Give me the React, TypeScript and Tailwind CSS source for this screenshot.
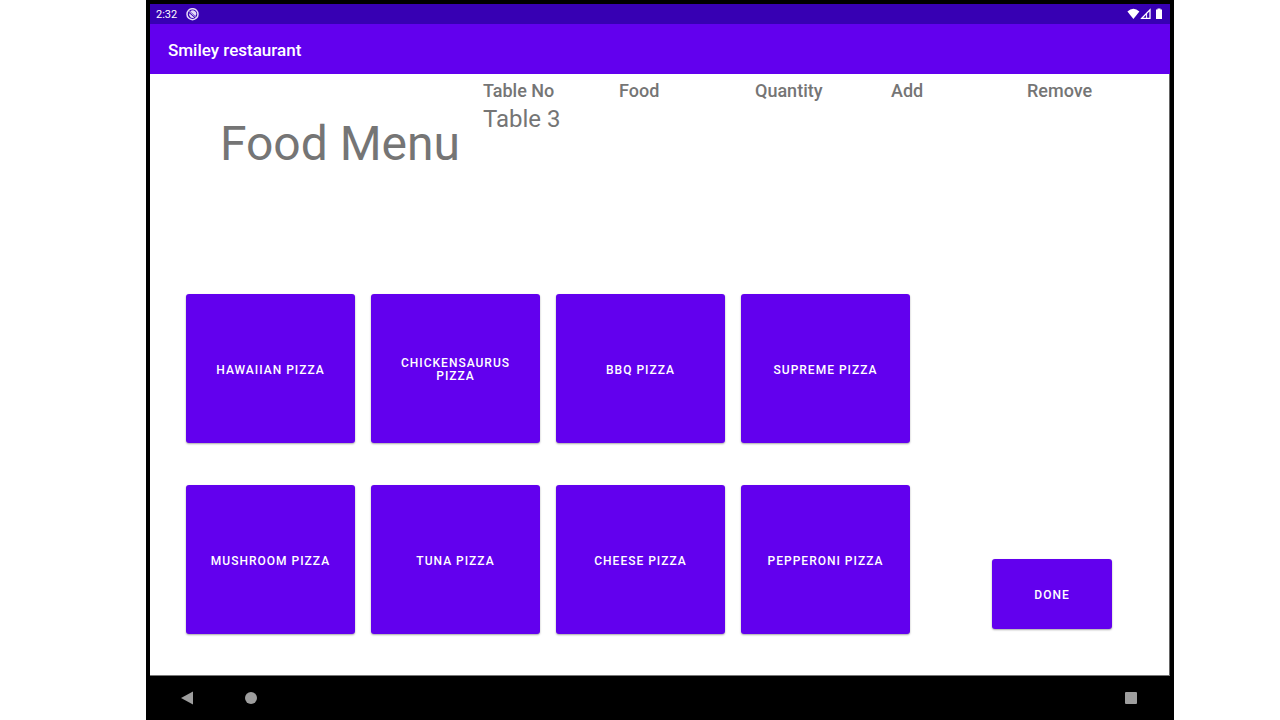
const pizzas = [
  "Hawaiian Pizza",
  "Chickensaurus Pizza",
  "BBQ Pizza",
  "Supreme Pizza",
  "Mushroom Pizza",
  "Tuna Pizza",
  "Cheese Pizza",
  "Pepperoni Pizza",
];

const columns = ["Table No", "Food", "Quantity", "Add", "Remove"];

const buttonStyle =
  "rounded-[3px] bg-[#6200ee] px-4 pt-[3px] text-xs leading-[13px] font-medium tracking-[1px] text-white uppercase shadow-[0_1px_2px_rgba(0,0,0,0.35)]";

function StatusBar() {
  return (
    <div className="flex h-5 items-center justify-between bg-[#3700b3] pr-[7px] pl-[6px] text-white">
      <div className="flex items-center gap-[9px]">
        <span className="pt-px text-[11px] leading-5">2:32</span>
        <svg className="size-[13px]" viewBox="0 0 13 13" fill="none" aria-hidden="true">
          <circle cx="6.5" cy="6.2" r="5.5" stroke="#e6dcf8" strokeWidth="1.5" />
          <path d="M4.2 3.6A3.4 3.4 0 0 1 9.4 8z" fill="#e6dcf8" />
          <path d="M3.3 5.2a3.4 3.4 0 0 0 4.9 4.2z" fill="#e6dcf8" />
          <path d="M3.2 3.6l7 6" stroke="#e6dcf8" strokeWidth="0.8" />
        </svg>
      </div>
      <svg className="h-3 w-9" viewBox="0 0 36 12" aria-hidden="true">
        <path d="M.4 3.4Q6.4 -1.8 12.4 3.4L6.4 11z" fill="#fff" />
        <path d="M14.8 10.3L23 1.8v8.5z" fill="none" stroke="#fff" strokeWidth="1.3" />
        <path d="M19.6 6v4" stroke="#fff" strokeWidth="1" />
        <path d="M29 1.6h1.5V.6h3v1H35V11h-6z" fill="#fff" />
      </svg>
    </div>
  );
}

function NavigationBar() {
  return (
    <nav className="flex h-[45px] items-center justify-between border-t border-[#777] bg-black pr-[33px] pb-px pl-[30px]">
      <div className="flex items-center gap-[51px]">
        <button type="button" aria-label="Back">
          <svg className="size-[14px]" viewBox="0 0 14 14" fill="#9e9e9e">
            <path d="M1 7L13 .4v13.2z" />
          </svg>
        </button>
        <button type="button" aria-label="Home" className="size-3 rounded-full bg-[#9e9e9e]" />
      </div>
      <button type="button" aria-label="Recent apps" className="size-3 rounded-[1px] bg-[#9e9e9e]" />
    </nav>
  );
}

export default function App() {
  return (
    <div className="min-h-screen bg-white pr-[106px] pl-[146px] font-['Roboto',sans-serif]">
      <div className="flex min-h-screen flex-col border-x-4 border-t-4 border-black">
        <StatusBar />
        <header className="flex h-[50px] items-center bg-[#6200ee] px-[18px] pt-[2px]">
          <span className="text-[17px] leading-6 font-medium text-white">Smiley restaurant</span>
        </header>
        <main className="flex flex-1 flex-col justify-between border-r border-[#666] bg-white pb-[41px] text-[#757575]">
          <section className="flex items-start justify-end gap-[23px] pr-[6px]">
            <h1 className="pt-[42px] text-5xl leading-[56px] whitespace-nowrap">Food Menu</h1>
            <table className="mt-[6px] w-[680px] shrink-0 table-fixed text-left">
              <thead>
                <tr>
                  {columns.map((name) => (
                    <th key={name} scope="col" className="p-0 text-lg leading-[22px] font-medium">
                      {name}
                    </th>
                  ))}
                </tr>
              </thead>
              <tbody>
                <tr>
                  <td className="p-0 text-2xl leading-[34px]">Table 3</td>
                  <td />
                  <td />
                  <td />
                  <td />
                </tr>
              </tbody>
            </table>
          </section>
          <section className="flex items-end gap-[82px] pr-[57px] pl-9">
            <div className="grid flex-1 grid-cols-4 gap-x-4 gap-y-[42px]">
              {pizzas.map((name) => (
                <button key={name} type="button" className={`h-[149px] ${buttonStyle}`}>
                  {name}
                </button>
              ))}
            </div>
            <button type="button" className={`mb-[5px] h-[70px] w-[120px] ${buttonStyle}`}>
              Done
            </button>
          </section>
        </main>
        <NavigationBar />
      </div>
    </div>
  );
}
